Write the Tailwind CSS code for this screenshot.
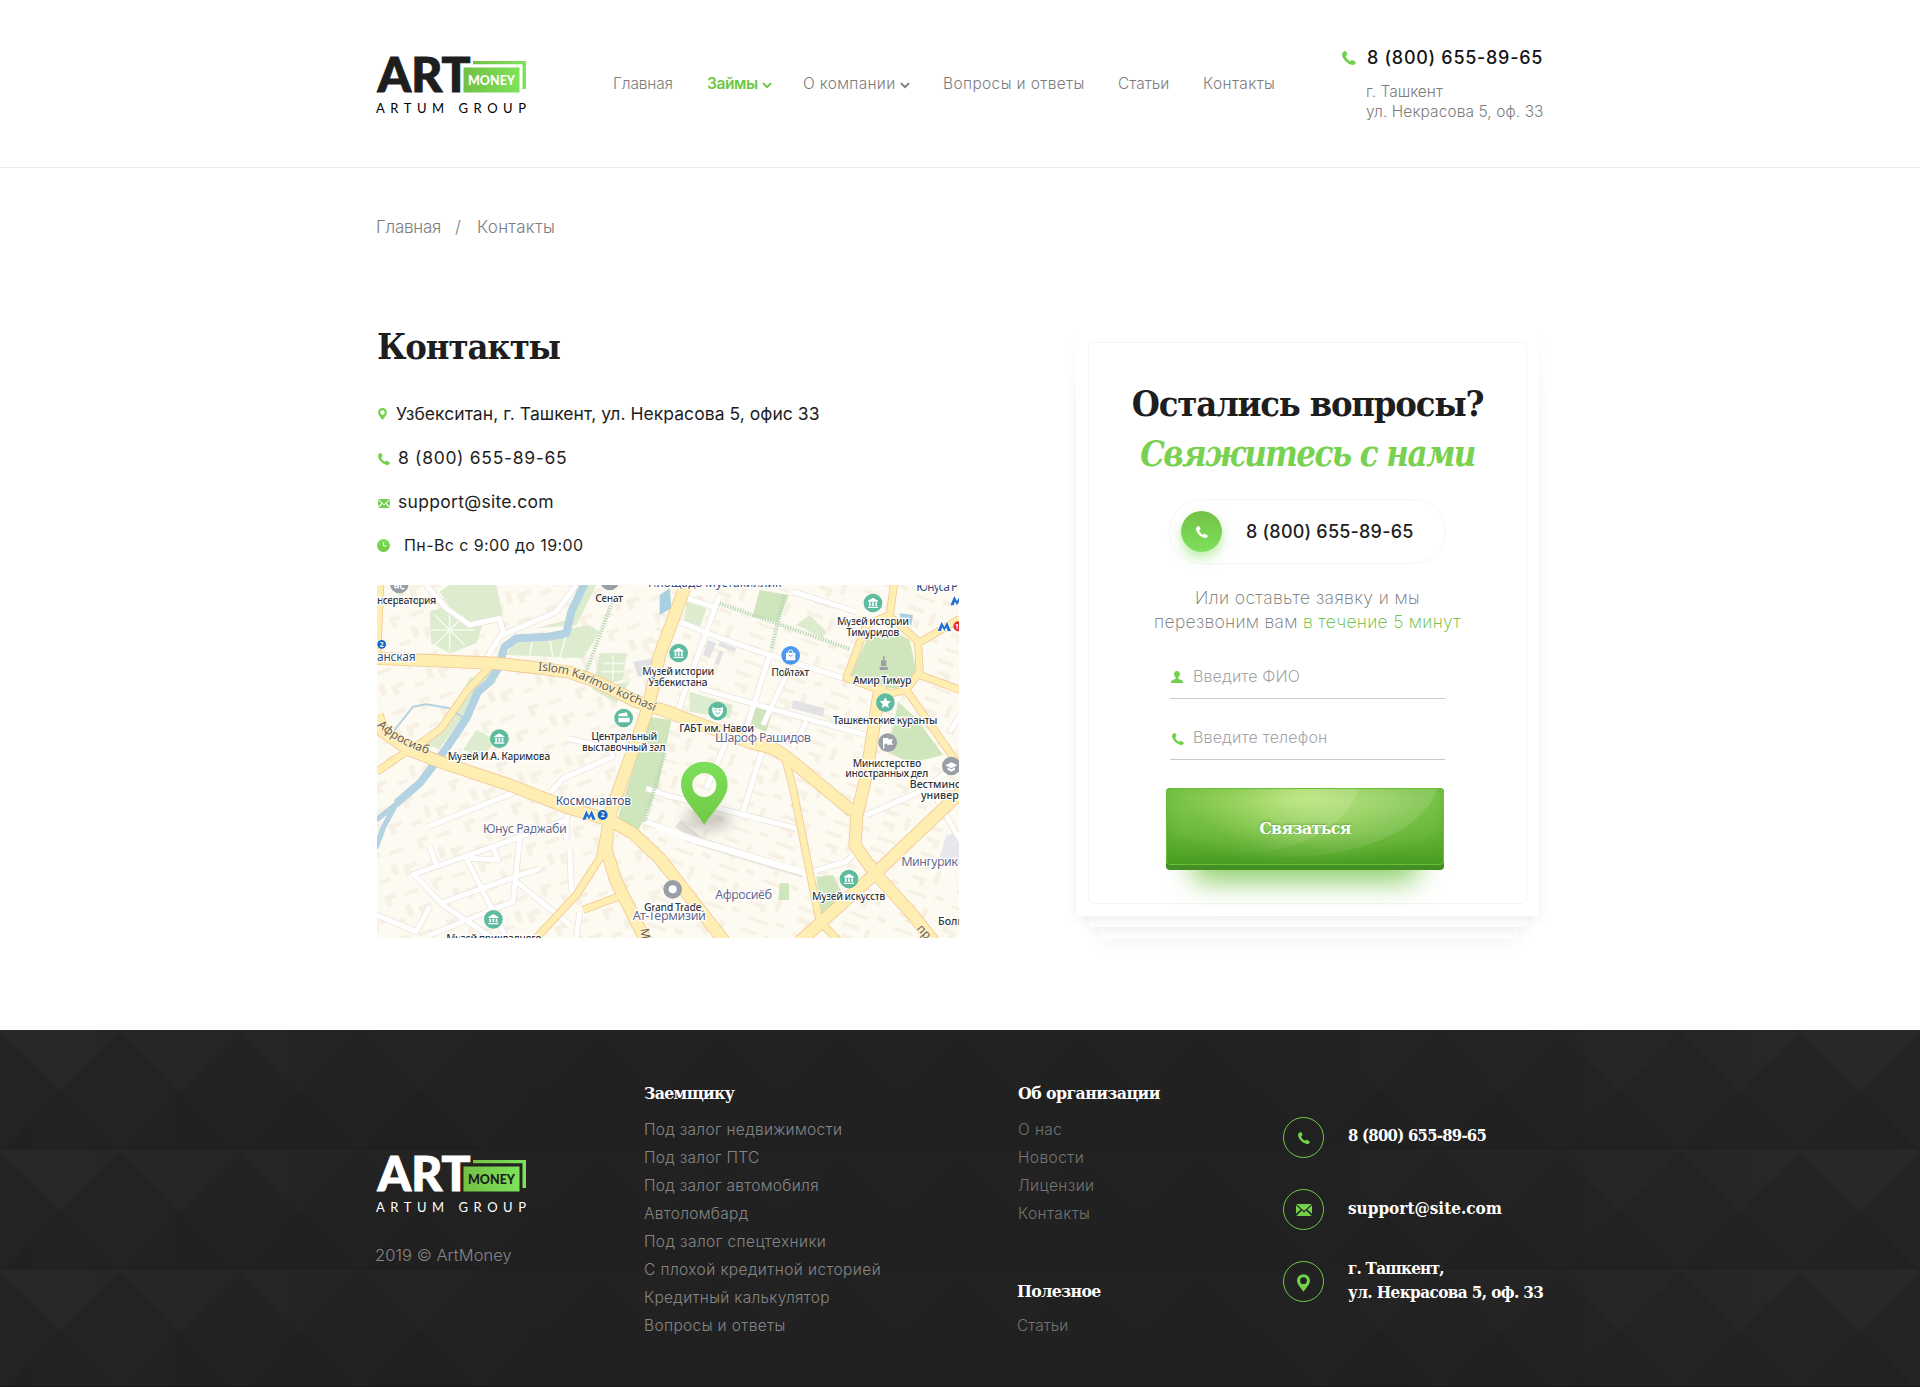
<!DOCTYPE html>
<html lang="ru">
<head>
<meta charset="utf-8">
<title>ArtMoney — Контакты</title>
<script src="https://cdn.jsdelivr.net/npm/@tailwindcss/browser@4"></script>
</head>
<body class="w-[1920px] overflow-x-hidden bg-white font-['Inter',sans-serif] whitespace-nowrap text-[#1e1e1e]">
<svg class="absolute h-0 w-0">
  <defs>
    <linearGradient id="lg" x1="0" x2="1"><stop offset="0" stop-color="#74bf45"/><stop offset="1" stop-color="#7de35a"/></linearGradient>
    <linearGradient id="gv" x1="0" x2="0" y1="0" y2="1"><stop offset="0" stop-color="#7ce05a"/><stop offset="1" stop-color="#72c945"/></linearGradient>
    <linearGradient id="glare" x1="0" x2="1"><stop offset=".3" stop-color="#fff" stop-opacity="0"/><stop offset=".8" stop-color="#fff" stop-opacity=".11"/></linearGradient>
  </defs>
  <symbol id="phone" viewBox="0 0 12 12"><path d="M.4 1.6 1.9.2c.5-.4 1.200-.2 1.500.3l1 1.700c.3.500.1 1-.3 1.400l-.9.8c.4 1.600 2 3.400 3.900 4.300l.9-.7c.4-.3.900-.4 1.300-.1l2.100 1.400c.5.400.5 1 .2 1.400-.6.800-1.700 1.400-2.900 1.200C5 11.400.3 7 0 3 0 2.500.1 2 .4 1.600z"/></symbol>
  <symbol id="pin" viewBox="0 0 14 19"><path fill-rule="evenodd" d="M7 0a7 7 0 0 1 7 7c0 4-4.500 8-7 12C4.500 15 0 11 0 7a7 7 0 0 1 7-7zm0 3.400a3.600 3.600 0 1 0 0 7.200 3.600 3.600 0 0 0 0-7.200z"/></symbol>
  <symbol id="mail" viewBox="0 0 16 12"><path d="M.3 0h15.400L8 7zM0 1.300 4.700 5.600 0 9.800zM16 1.300v8.500l-4.700-4.200zM5.700 6.500 8 8.600l2.300-2.100 5.400 5.500H.3z"/></symbol>
  <symbol id="user" viewBox="0 0 12 12"><path d="M6 0c1.700 0 2.900 1.200 2.900 3 0 1.500-.7 2.900-1.600 3.500v1.300l3.500 1.400c.8.300 1.200.9 1.200 1.600V12H0v-1.200c0-.7.4-1.300 1.200-1.600l3.500-1.400V6.500C3.800 5.900 3.100 4.500 3.100 3 3.100 1.200 4.300 0 6 0z"/></symbol>
  <symbol id="chev" viewBox="0 0 10 7"><path d="M1 1.200 5 5.200 9 1.200" fill="none" stroke="currentColor" stroke-width="1.900"/></symbol>
</svg>

<header class="h-[168px] border-b border-[#ededed]">
  <div class="mx-auto flex w-[1168px] items-start">
    <svg class="mt-[57px] h-[58px] w-[151px] overflow-visible" viewBox="0 0 151 58">
      <text x="1.500" y="34.900" font-family="Lato" font-weight="900" font-size="47.500" textLength="93" lengthAdjust="spacingAndGlyphs" fill="#1e1e1e" stroke="#1e1e1e" stroke-width="1">ART</text>
      <path d="M97 4h53v28h-3.500V7.300H97z" fill="url(#lg)"/>
      <rect x="87.500" y="10.500" width="56" height="25" fill="url(#lg)"/>
      <text x="92" y="28" font-family="Lato" font-weight="900" font-size="12.500" textLength="47" lengthAdjust="spacingAndGlyphs" fill="#fff">MONEY</text>
      <text x="0" y="55.700" font-family="Lato" font-weight="400" font-size="13" textLength="150" fill="#000">ARTUM GROUP</text>
    </svg>
    <nav class="mt-[72px] ml-[86px] grid grid-cols-[94px_96px_140px_175px_85px_auto] text-[15.5px] leading-6 font-light text-[#7d7d7d]">
      <a class="tracking-[-0.15px]">Главная</a>
      <a class="flex items-center gap-[4px] font-semibold text-[#6cc644]"><span class="tracking-[-0.4px]">Займы</span><svg class="mt-[2px] h-[7px] w-[10px]"><use href="#chev"/></svg></a>
      <a class="flex items-center gap-[4px]"><span class="tracking-[0.3px]">О компании</span><svg class="mt-[2px] h-[7px] w-[10px]"><use href="#chev"/></svg></a>
      <a class="tracking-[0.36px]">Вопросы и ответы</a>
      <a>Статьи</a>
      <a class="tracking-[0.4px]">Контакты</a>
    </nav>
    <div class="mt-[46px] ml-auto w-[202px]">
      <div class="flex items-center gap-[11px] text-[18px] leading-6 font-medium text-[#151515]"><svg class="h-[14px] w-[14px] fill-[#73d04c]"><use href="#phone"/></svg><span class="tracking-[0.7px]">8 (800) 655-89-65</span></div>
      <div class="mt-[12px] ml-[24px] text-[15.5px] leading-5 font-light text-[#7d7d7d]"><div>г. Ташкент</div><div class="tracking-[0.08px]">ул. Некрасова 5, оф. 33</div></div>
    </div>
  </div>
</header>

<main class="mx-auto w-[1168px] pb-[92px]">
  <div class="flex pt-[47px] text-[17px] leading-6 font-light text-[#7d7d7d]"><span class="w-[79px] tracking-[-0.25px]">Главная</span><span class="w-[22px]">/</span><span class="tracking-[0.3px]">Контакты</span></div>
  <div class="mt-[87px] flex justify-between">
    <section class="ml-px w-[582px]">
      <h1 class="font-['DejaVu_Serif_Condensed','DejaVu_Serif',serif] text-[36px] leading-10 font-bold tracking-[-1.1px]">Контакты</h1>
      <ul class="mt-[36px] flex flex-col gap-5 text-[17.500px] leading-6">
        <li class="flex items-center"><svg class="ml-[1px] h-[12px] w-[9px] fill-[#73d04c]"><use href="#pin"/></svg><span class="ml-[9px] tracking-[0.05px]">Узбекситан, г. Ташкент, ул. Некрасова 5, офис 33</span></li>
        <li class="flex items-center"><svg class="mt-[2px] ml-[1px] h-[12px] w-[12px] fill-[#73d04c]"><use href="#phone"/></svg><span class="ml-[8px] tracking-[0.68px]">8 (800) 655-89-65</span></li>
        <li class="flex items-center"><svg class="mt-[2px] ml-[1px] h-[9px] w-[12px] fill-[#73d04c]"><use href="#mail"/></svg><span class="ml-[8px] tracking-[0.3px]">support@site.com</span></li>
        <li class="-mt-px flex items-center text-[16px]"><svg class="mt-[1px] h-[13px] w-[13px]" viewBox="0 0 13 13"><circle cx="6.500" cy="6.500" r="6.500" fill="url(#gv)"/><path d="M6.500 3v4H9.500" stroke="#fff" fill="none"/></svg><span class="ml-[14px] tracking-[0.4px]">Пн-Вс с 9:00 до 19:00</span></li>
      </ul>
      <div class="mt-[28px] h-[353px] w-[582px] overflow-hidden rounded-[4px]">
        <svg class="block h-[353px] w-[582px]" viewBox="22 30 1746 1059" font-family="'Noto Sans',sans-serif">
          <defs>
            <g id="roads" fill="none" stroke-linejoin="round">
              <path d="M22 250 380 265 500 278 600 292 680 320 800 380 900 412 970 440 1150 505 1210 520 1250 545 1450 710"/>
              <path d="M22 420 40 470 120 525 210 560 420 630 600 700 720 735 790 775 870 850 1065 1100"/>
              <path d="M952 20 870 240 835 400 720 720 708 820 740 920 830 1100"/>
              <path d="M1532 330 1490 600 1462 720 1456 810 1512 890 1630 1020 1700 1110"/>
              <path d="M1290 1100 1512 900 1780 645"/>
            </g>
            <g id="small" fill="none" stroke-linejoin="round">
              <path d="M365 270 290 350 215 460 160 500 110 530 22 590"/>
              <path d="M712 740 690 850 620 960 480 1110"/><path d="M640 1005 745 965"/>
              <path d="M22 250 32 20"/>
              <path d="M1245 545 1270 640 1320 890 1350 1040 1420 1110"/>
              <path d="M1574 20 1560 125 1592 150 1645 200 1650 290 1610 345 1560 356 1430 308 1490 150 1560 120M1645 205 1770 132M1650 300 1780 348M1610 345 1760 560 1790 600"/>
            </g>
            <g id="white" fill="none" stroke-linejoin="round">
              <path d="M170 30 230 100 300 150 390 130 400 170 350 250M400 180 560 110 620 30"/>
              <path d="M175 755 440 650M125 900 440 790 590 735 600 700M130 895 220 990 400 1110M290 850 410 1089M450 790 430 980 180 1080M210 985 510 880M300 850 385 855 370 815M180 815 200 870M440 920 600 1050M22 1020 140 1070 180 995M600 825 605 940 620 970M590 735 590 800M630 1010 620 1089M545 650 580 610 730 545 720 520 595 490"/>
              <path d="M1050 60 920 420M920 60 1030 95M930 140 1040 185 1200 240 1440 315M990 340 1200 400 1490 480M1200 240 1130 460M1250 300 1180 450M1270 50 1460 110M1070 500 1010 640M1180 520 1120 710M1310 440 1270 520M870 655 1280 760M1490 720 1640 655 1780 560M1700 670 1780 810M1740 470 1780 410M1310 895 1430 860 1450 840M825 740 870 755 980 800M830 640 900 665"/>
            </g>
            <g id="museum"><circle r="28" fill="#5dbba0"/><path d="M-15-7 0-16 15-7v3h-30zM-12-2h5v11h-5zM-2.500-2h5v11h-5zM7-2h5v11H7zM-15 11h30v4h-30z" fill="#fff"/></g>
            <g id="metro"><path d="M-20 14-8-14 0 2 8-14 20 14H10L6 3 0 14-6 3-10 14z" fill="#1f6fd0" stroke="#fff" stroke-width="4" paint-order="stroke"/></g>
            <pattern id="bld" width="150" height="130" patternUnits="userSpaceOnUse" patternTransform="rotate(-20)"><path d="M10 12h34v14H26v20H10zM70 20h44v12H70zM60 60h18v34H60zM96 74h40v14h-22v18H96zM14 92h32v12H14z" fill="#f6f1e4"/></pattern>
            <pattern id="bld2" width="140" height="120" patternUnits="userSpaceOnUse" patternTransform="rotate(20)"><path d="M10 10h50v12H10zM84 10h14v40H84zM20 44h40v26H44V58H20zM104 80h26v14h-26zM20 92h60v10H20z" fill="#f6f1e4"/></pattern>
            <filter id="soft" x="-50%" y="-50%" width="200%" height="200%"><feGaussianBlur stdDeviation="20"/></filter>
          </defs>
          <rect x="22" y="30" width="1746" height="1059" fill="#fdfaf1"/>
          <rect x="22" y="30" width="850" height="1059" fill="url(#bld)"/>
          <rect x="830" y="30" width="938" height="1059" fill="url(#bld2)"/>
          <g fill="#ddebcf">
            <path d="M210 50 240 30H380l20 90-90 30-60-40zM180 110l60-20 100 55-20 60-80 30-55-30zM440 190l220-40 30 20-50 80-230-10zM500 160l110-30 10-100h60l-60 120zM690 235h80l-10 80-90 20zM665 340 780 320 740 385zM300 310l70-20 10 30-50 40-120 160-50-10 90-100zM320 465l60 30-40 50-60-20zM950 80l60 20-20 60-45-15zM960 350l130 40-10 40-120-20zM1280 150l40-30 50 50-10 20z"/>
          </g>
          <path d="M240 100v130M185 165h130M195 120l90 90M285 120l-90 90M490 190l-10 50M540 190l10 55M590 180l-20 70M700 265h65M695 290h65M730 240v75" fill="none" stroke="#f6faee" stroke-width="5"/>
          <g fill="#cfe5bc">
            <path d="M840 425 905 435 865 640 800 780 742 735zM1170 45 1258 60 1225 140 1148 125zM1150 390 1210 405 1190 470 1135 450zM1495 185 1560 160 1620 195 1640 290 1600 340 1530 340 1440 305zM1340 905 1390 900 1420 960 1355 1020zM1585 380 1640 430 1720 540 1620 565 1555 530zM1230 925h28v50h-32zM1505 870l50-15-30 40z"/>
          </g>
          <g fill="#e2e2e4"><path d="M1270 375 1365 400 1360 425 1265 400zM1015 195 1040 205 1020 250 1000 240zM1050 200l50 20-5 12-50-20zM1050 225l12 5-15 40-12-5zM790 260l60-10-5 50-40 5z"/></g>
          <path d="M1730 780l40-5v100l-60-30z" fill="#e9e7ee"/>
          <g fill="none" stroke="#b3d3e2" stroke-linejoin="round">
            <path stroke-width="24" d="M645 25 605 110 590 175 540 185 440 190 405 215 385 280 360 320 325 350 290 430 230 520 150 625 80 685"/>
            <path stroke-width="16" d="M90 680 20 735M80 685 40 760 18 820"/>
            <path stroke-width="6" d="M75 465 130 395 170 388 240 400 290 435"/>
          </g>
          <path d="M870 60 900 40 905 100 870 120z M1590 115l40 5-5 30-30-5z" fill="#a8cfe2"/>
          <g stroke="#e7e2da" stroke-width="19"><use href="#white"/></g>
          <g stroke="#fff" stroke-width="15"><use href="#white"/></g>
          <path d="M925 745 990 800 1300 895" fill="none" stroke="#e7e2da" stroke-width="26"/><path d="M860 755 990 800 1310 895" fill="none" stroke="#fff" stroke-width="20"/>
          <g fill="none" stroke="#bcd9b6" stroke-width="12" stroke-dasharray="4 4"><path d="M650 290 735 60M1050 85 1440 222M1245 60 1205 220M885 535 825 740"/></g>
          <g stroke="#f2c896" stroke-width="24"><use href="#small"/></g>
          <g stroke="#f2c896" stroke-width="39"><use href="#roads"/></g>
          <g stroke="#feeeb2" stroke-width="19"><use href="#small"/></g>
          <g stroke="#feeeb2" stroke-width="34"><use href="#roads"/></g>

          <g fill="#6b5d51" stroke="#fdf3cf" stroke-width="6" paint-order="stroke" font-size="36">
            <path id="p1" d="M505 287Q600 292 660 325L860 412" fill="none" stroke="none"/>
            <path id="p2" d="M22 452Q80 508 182 540" fill="none" stroke="none"/>
            <text><textPath href="#p1" textLength="372">Islom Karimov ko‘chasi</textPath></text>
            <text><textPath href="#p2" textLength="176">Афросиаб</textPath></text>
            <text x="812" y="1062" transform="rotate(80 812 1062)">М</text>
            <text x="1640" y="1062" transform="rotate(48 1640 1062)">пр-т</text>
          </g>
          <g fill="#66688c" stroke="#fff" stroke-width="7" paint-order="stroke" font-size="38">
            <text x="340" y="773" textLength="252">Юнус Раджаби</text>
            <text x="1036" y="500" textLength="288">Шароф Рашидов</text>
            <text x="1037" y="972" textLength="170">Афросиёб</text>
            <text x="1595" y="874" textLength="170">Мингурик</text>
            <text x="789" y="1036" textLength="220">Ат-Термизий</text>
          </g>
          <g fill="#35507f" stroke="#fff" stroke-width="7" paint-order="stroke" font-size="36">
            <text x="558" y="690" textLength="226">Космонавтов</text>
            <text x="22" y="257" textLength="116">анская</text>
            <text x="1640" y="47" textLength="126">Юнуса Р</text>
            <text x="835" y="37" textLength="400">Площадь Мустакиллик</text>
          </g>
          <g fill="#34353b" stroke="#fff" stroke-width="7" paint-order="stroke" font-size="32" font-weight="500">
            <text x="22" y="88" textLength="178">нсерватория</text>
            <text x="677" y="82" textLength="83">Сенат</text>
            <text x="234" y="554" textLength="308">Музей И.А. Каримова</text>
            <text x="665" y="495" textLength="198">Центральный</text>
            <text x="637" y="527" textLength="251">выставочный зал</text>
            <text x="818" y="299" textLength="216">Музей истории</text>
            <text x="836" y="332" textLength="178">Узбекистана</text>
            <text x="929" y="471" textLength="224">ГАБТ им. Навои</text>
            <text x="1205" y="304" textLength="114">Пойтахт</text>
            <text x="1402" y="149" textLength="216">Музей истории</text>
            <text x="1430" y="182" textLength="159">Тимуридов</text>
            <text x="1450" y="327" textLength="176">Амир Тимур</text>
            <text x="1390" y="446" textLength="313">Ташкентские куранты</text>
            <text x="1449" y="575" textLength="206">Министерство</text>
            <text x="1427" y="607" textLength="249">иностранных дел</text>
            <text x="1620" y="639">Вестминстерский</text>
            <text x="1654" y="672">университет</text>
            <text x="1327" y="974" textLength="220">Музей искусств</text>
            <text x="823" y="1007" textLength="173">Grand Trade</text>
            <text x="1705" y="1050">Большой</text>
            <text x="230" y="1100" textLength="286">Музей прикладного</text>
          </g>
          <use href="#museum" x="389" y="491"/><use href="#museum" x="371" y="1033"/><use href="#museum" x="927" y="234"/><use href="#museum" x="1510" y="84"/><use href="#museum" x="1438" y="912"/>
          <circle cx="762" cy="429" r="28" fill="#5dbba0"/><path d="M746 428h34v14h-34zM745 424l3-8 24-4 2 12z" fill="#fff"/>
          <circle cx="1044" cy="408" r="28" fill="#5dbba0"/><path d="M1028 396q16 8 32 0v14q-4 12-16 17-12-5-16-17z" fill="#fff"/><path d="M1034 405h7M1047 405h7M1038 413q6 6 12 0" stroke="#5dbba0" stroke-width="3" fill="none"/>
          <circle cx="1547" cy="383" r="28" fill="#5dbba0"/><path d="m1547 366 5 11 12 1.500-9 8.500 2.500 12-10.500-6-10.500 6 2.500-12-9-8.500 12-1.500z" fill="#fff"/>
          <circle cx="1263" cy="241" r="28" fill="#4c98ef"/><path d="M1249 233h28v23h-28z" fill="#fff"/><path d="M1257 233v-5q6-7 12 0v5" stroke="#fff" stroke-width="3" fill="none"/><path d="M1257 240q6 8 12 0" stroke="#4c98ef" stroke-width="3" fill="none"/>
          <g fill="#9a9ea6"><circle cx="1554" cy="503" r="28"/><circle cx="1745" cy="573" r="28"/><circle cx="909" cy="943" r="28"/><circle cx="89" cy="27" r="28"/><circle cx="720" cy="18" r="28"/><path d="M1530 276h24v9h-24zM1534 256h16v17h-16zM1540 244h5v10h-5z"/></g>
          <circle cx="909" cy="943" r="12" fill="#fff"/><path d="M1540 489h16v4h14l-4 8 4 8h-18v-3h-8v15h-4z" fill="#fff"/><path d="m1727 571 18-9 18 9-18 9zM1734 577v7l11 6 11-6v-7l-11 6z" fill="#fff"/><path d="M76 30h10v8H76zM96 28a7 7 0 1 0 8 12" fill="none" stroke="#fff" stroke-width="4"/>
          <use href="#metro" x="658" y="720"/><use href="#metro" x="1724" y="154"/><use href="#metro" x="1762" y="77"/>
          <g font-size="20" font-weight="700" fill="#fff" text-anchor="middle"><circle cx="699" cy="720" r="15" fill="#1565c0"/><text x="699" y="727">2</text><circle cx="36" cy="208" r="13" fill="#1565c0"/><text x="36" y="215">2</text><circle cx="1766" cy="154" r="15" fill="#e32b27"/><text x="1762" y="161">1</text></g>
          <ellipse cx="1014" cy="732" rx="70" ry="34" fill="#000" opacity=".2" filter="url(#soft)"/>
          <path fill="url(#gv)" fill-rule="evenodd" d="M1004 560c40 0 70 30 70 68 0 44-42 76-70 122-28-46-70-78-70-122 0-38 30-68 70-68zm0 34a36 36 0 1 0 0 72 36 36 0 0 0 0-72z"/>
        </svg>
      </div>
    </section>

    <section class="relative mr-[5px] h-[590px] w-[463px]">
      <div class="absolute -inset-x-5 top-0 -bottom-14 [mask-image:linear-gradient(to_bottom,transparent,black_90px)]">
        <div class="absolute right-[41px] bottom-[33px] left-[44px] h-[60px] rounded-[4px] bg-white shadow-[0_6px_16px_rgba(0,0,0,0.04)]"></div>
        <div class="absolute right-[31px] bottom-[45px] left-[33px] h-[60px] rounded-[4px] bg-white shadow-[0_4px_12px_rgba(0,0,0,0.06)]"></div>
        <div class="absolute inset-x-5 top-0 bottom-14 rounded-[4px] bg-white shadow-[0_3px_12px_rgba(0,0,0,0.07)]"></div>
      </div>
      <div class="absolute top-[16px] bottom-[12px] left-[12px] w-[439px] rounded-[5px] border border-[#f5f5f5]"></div>
      <div class="relative flex flex-col items-center pt-[52px]">
        <h2 class="text-center font-['DejaVu_Serif_Condensed','DejaVu_Serif',serif] text-[36px] leading-[50px] font-bold"><span class="block h-[50px] tracking-[-1.22px]">Остались вопросы?</span><span class="block h-[50px] pt-px text-[34.500px] tracking-[-1.6px] text-[#78d14f] italic">Свяжитесь с нами</span></h2>
        <div class="mt-[21px] flex h-[65px] w-[277px] items-center rounded-full border border-[#f6f6f6]">
          <span class="ml-[11px] flex size-[41px] items-center justify-center rounded-full bg-linear-to-b from-[#74c147] to-[#7de05a] shadow-[0_6px_12px_rgba(125,224,90,0.5)]"><svg class="mt-px h-[12px] w-[12px] fill-white"><use href="#phone"/></svg></span>
          <span class="ml-[24px] text-[18px] font-medium tracking-[0.2px]">8 (800) 655-89-65</span>
        </div>
        <p class="mt-[22px] text-center text-[17.500px] leading-6 font-extralight text-[#707070]"><span class="tracking-[0.4px]">Или оставьте заявку и мы</span><br><span class="tracking-[0.3px]">перезвоним вам <span class="text-[#5db82f]">в течение 5 минут</span></span></p>
        <div class="mt-[30px] flex h-[35px] w-[275px] items-start border-b border-[#cbcbcb] text-[16px] leading-6 font-light tracking-[0.12px] text-[#a6a6a6]"><svg class="mt-[7px] ml-[1px] h-[12px] w-[12px] fill-[#73d04c]"><use href="#user"/></svg><span class="ml-[10px]">Введите ФИО</span></div>
        <div class="mt-[26px] flex h-[35px] w-[275px] items-start border-b border-[#cbcbcb] text-[16px] leading-6 font-light tracking-[0.16px] text-[#a6a6a6]"><svg class="mt-[8px] ml-[2px] h-[12px] w-[12px] fill-[#73d04c]"><use href="#phone"/></svg><span class="ml-[9px]">Введите телефон</span></div>
        <div class="relative mt-[28px] mr-[5px]">
          <div class="absolute top-[55px] right-[26px] left-[26px] h-[38px] rounded-[12px] bg-[#6cc03b]/80 blur-[14px]"></div>
          <button class="relative block h-[82px] w-[278px] overflow-hidden rounded-[4px] bg-[#438e25]">
            <span class="absolute inset-x-0 top-0 flex h-[77px] items-center justify-center overflow-hidden rounded-[4px] border border-[#6abf35] bg-[radial-gradient(ellipse_60%_105%_at_50%_0%,rgba(200,237,130,0.95)_0%,rgba(180,226,115,0.6)_40%,rgba(150,210,90,0.2)_75%,rgba(130,200,80,0)_100%),linear-gradient(to_bottom,#7cc54d,#69b73a_55%,#4a9d23)] shadow-[inset_0_0_14px_rgba(70,160,30,0.4)]">
              <svg class="absolute inset-0 h-full w-full" viewBox="0 0 278 77"><path d="M0 0h275C262 36 210 70 110 70H0z" fill="url(#glare)"/><path d="M0 0h194C186 28 150 62 80 66H0z" fill="url(#glare)"/></svg>
              <span class="relative mt-[3px] font-['DejaVu_Serif_Condensed','DejaVu_Serif',serif] text-[17.500px] font-bold tracking-[-0.6px] text-white [text-shadow:0_-1px_2px_rgba(60,140,20,0.6)]">Связаться</span>
            </span>
          </button>
        </div>
      </div>
    </section>
  </div>
</main>

<footer class="relative h-[357px] overflow-hidden bg-[#212121]">
  <svg class="absolute inset-0 h-full w-full">
    <defs>
      <pattern id="tri" width="120" height="120" patternUnits="userSpaceOnUse"><path d="M0 0h120L60 60z" fill="#fff" opacity=".018"/><path d="M0 120h120L60 60z" fill="#000" opacity=".06"/></pattern>
      <linearGradient id="fade" x1="0" x2="1"><stop offset="0" stop-color="#242424"/><stop offset=".28" stop-color="#212121"/><stop offset=".65" stop-color="#212121"/><stop offset="1" stop-color="#252525"/></linearGradient>
      <linearGradient id="vis" x1="0" x2="1"><stop offset="0" stop-color="#fff"/><stop offset=".3" stop-color="#666"/><stop offset=".65" stop-color="#666"/><stop offset="1" stop-color="#fff"/></linearGradient>
      <mask id="m"><rect width="1920" height="357" fill="url(#vis)"/></mask>
    </defs>
    <rect width="1920" height="357" fill="url(#fade)"/><rect width="1920" height="357" fill="url(#tri)" mask="url(#m)"/><rect y="356" width="1920" height="1" fill="#191919"/>
  </svg>
  <div class="relative mx-auto grid w-[1168px] grid-cols-[268px_374px_265px_auto] text-[15.5px] leading-7 font-light text-[#868686]">
    <div class="pt-[126px]">
      <svg class="h-[58px] w-[151px] overflow-visible" viewBox="0 0 151 58">
        <text x="1.500" y="34.900" font-family="Lato" font-weight="900" font-size="47.500" textLength="93" lengthAdjust="spacingAndGlyphs" fill="#fff" stroke="#fff" stroke-width="1">ART</text>
        <path d="M97 4h53v28h-3.500V7.300H97z" fill="url(#lg)"/>
        <rect x="87.500" y="10.500" width="56" height="25" fill="url(#lg)"/>
        <text x="92" y="28" font-family="Lato" font-weight="900" font-size="12.500" textLength="47" lengthAdjust="spacingAndGlyphs" fill="#1e1e1e">MONEY</text>
        <text x="0" y="55.700" font-family="Lato" font-weight="400" font-size="13" textLength="150" fill="#fff">ARTUM GROUP</text>
      </svg>
      <div class="mt-[27px] -ml-px text-[16.500px] tracking-[0.05px]">2019 © ArtMoney</div>
    </div>
    <div class="pt-[49px]">
      <h3 class="font-['DejaVu_Serif_Condensed','DejaVu_Serif',serif] text-[17.500px] font-bold tracking-[-0.65px] text-white">Заемщику</h3>
      <div class="mt-[9px] flex flex-col items-start tracking-[0.3px]">
        <a>Под залог недвижимости</a><a>Под залог ПТС</a><a>Под залог автомобиля</a><a>Автоломбард</a><a class="tracking-[0.4px]">Под залог спецтехники</a><a class="tracking-[0.4px]">С плохой кредитной историей</a><a>Кредитный калькулятор</a><a class="tracking-[0.36px]">Вопросы и ответы</a>
      </div>
    </div>
    <div class="pt-[49px] text-[#747474]">
      <h3 class="font-['DejaVu_Serif_Condensed','DejaVu_Serif',serif] text-[17.500px] font-bold tracking-[-0.55px] text-white">Об организации</h3>
      <div class="mt-[9px] flex flex-col items-start tracking-[0.4px]">
        <a>О нас</a><a>Новости</a><a>Лицензии</a><a>Контакты</a>
      </div>
      <h3 class="mt-[49px] -ml-px font-['DejaVu_Serif_Condensed','DejaVu_Serif',serif] text-[17.500px] font-bold tracking-[-0.6px] text-white">Полезное</h3>
      <div class="mt-[7px] -ml-px"><a>Статьи</a></div>
    </div>
    <div class="flex flex-col gap-[31px] pt-[87px] font-['DejaVu_Serif_Condensed','DejaVu_Serif',serif] text-[17px] leading-6 font-bold text-white">
      <div class="flex items-center gap-[24px]"><span class="flex size-[41px] items-center justify-center rounded-full border border-[#73c947]"><svg class="mt-px h-[12px] w-[12px] fill-[#73d04c]"><use href="#phone"/></svg></span><span class="-mt-[3px] text-[16.500px] tracking-[-0.72px]">8 (800) 655-89-65</span></div>
      <div class="flex items-center gap-[24px]"><span class="flex size-[41px] items-center justify-center rounded-full border border-[#73c947]"><svg class="mt-px h-[12px] w-[16px] fill-[#73d04c]"><use href="#mail"/></svg></span><span class="-mt-1">support@site.com</span></div>
      <div class="flex items-center gap-[24px]"><span class="flex size-[41px] items-center justify-center rounded-full border border-[#73c947]"><svg class="mt-[2px] h-[18px] w-[13px] fill-[#73d04c]"><use href="#pin"/></svg></span><div class="-mt-5 -mb-4"><div class="tracking-[-0.8px]">г. Ташкент,</div><div class="tracking-[-0.62px]">ул. Некрасова 5, оф. 33</div></div></div>
    </div>
  </div>
</footer>
</body>
</html>
